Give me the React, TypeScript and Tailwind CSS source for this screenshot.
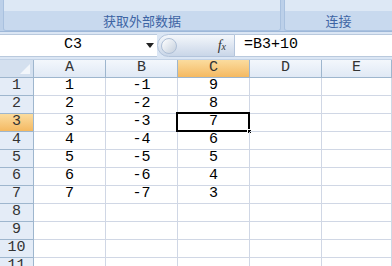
const cols = ["A", "B", "C", "D", "E"];

const data: Record<number, string[]> = {
  1: ["1", "-1", "9"],
  2: ["2", "-2", "8"],
  3: ["3", "-3", "7"],
  4: ["4", "-4", "6"],
  5: ["5", "-5", "5"],
  6: ["6", "-6", "4"],
  7: ["7", "-7", "3"],
};

const rows = [1, 2, 3, 4, 5, 6, 7, 8, 9, 10, 11];
const mono = "font-['SimSun','Liberation_Mono','DejaVu_Sans_Mono',monospace]";

export default function App() {
  return (
    <div className="w-[392px] h-[266px] overflow-hidden bg-white">
      {/* ribbon */}
      <div className="flex h-[32px] bg-[#bcd0e9] border-b border-[#9db7d8]">
        <div className="ml-[3px] w-[278px] flex flex-col border-x border-b border-[#a9c1df] rounded-b-[3px] overflow-hidden">
          <div className="h-[11px] bg-[#dde8f5]" />
          <div className="flex-1 flex items-center justify-center bg-[#c8d9ee] text-[13px] text-[#3d64a4] font-['Noto_Sans_CJK_SC',sans-serif]">
            获取外部数据
          </div>
        </div>
        <div className="ml-[3px] flex-1 flex flex-col border-l border-b border-[#a9c1df] rounded-bl-[3px] overflow-hidden">
          <div className="h-[11px] bg-[#dde8f5]" />
          <div className="flex-1 flex items-center justify-center bg-[#c8d9ee] text-[13px] text-[#3d64a4] font-['Noto_Sans_CJK_SC',sans-serif]">
            连接
          </div>
        </div>
      </div>

      {/* formula bar */}
      <div className="flex h-[28px] bg-[#dbe6f4] pt-[2px] pb-[2px] border-b border-[#c2d2e6]">
        <div className="w-[157px] flex items-center bg-white border-y border-[#b9c9dd]">
          <span className={`flex-1 text-center text-[15px] text-black ${mono}`}>C3</span>
          <svg width="8" height="5" viewBox="0 0 8 5" className="mr-[3px]">
            <path d="M0 0 H8 L4 5 Z" fill="#222" />
          </svg>
        </div>
        <div className="relative w-[78px] flex items-center justify-end pr-[8px] rounded-l-full bg-gradient-to-b from-[#f4f7fb] to-[#c9d6e8] border border-[#b3c4db]">
          <span className="absolute left-[3px] top-[3px] w-[16px] h-[16px] rounded-full bg-gradient-to-br from-[#ffffff] to-[#c4cfdd] border border-[#aebfd6]" />
          <span className="font-['Liberation_Serif',serif] italic text-[14px] text-[#333] leading-none">
            f<span className="text-[10px]">x</span>
          </span>
        </div>
        <div className={`flex-1 flex items-center pl-[9px] bg-white border-y border-[#b9c9dd] text-[15px] text-black ${mono}`}>
          =B3+10
        </div>
      </div>

      {/* grid */}
      <div className="grid grid-cols-[34px_72px_72px_72px_72px_1fr] auto-rows-[18px]">
        <div className="relative bg-[#d4e0ef] border-r border-b border-[#9eb6ce]">
          <svg width="10" height="10" viewBox="0 0 10 10" className="absolute right-[3px] bottom-[3px]">
            <path d="M10 0 V10 H0 Z" fill="#f2f6fb" />
          </svg>
        </div>
        {cols.map((c) => (
          <div
            key={c}
            className={`flex items-center justify-center text-[15px] text-[#333] border-r border-b border-[#9eb6ce] ${mono} ${
              c === "C" ? "bg-gradient-to-b from-[#fbdc9e] to-[#f4b961]" : "bg-gradient-to-b from-[#f3f7fc] to-[#e0e9f5]"
            }`}
          >
            {c}
          </div>
        ))}
        {rows.map((r) => (
          <RowCells key={r} r={r} />
        ))}
      </div>
    </div>
  );
}

function RowCells({ r }: { r: number }) {
  const vals = data[r] || [];
  return (
    <>
      <div
        className={`flex items-center justify-center text-[15px] text-[#333] border-r border-b border-[#9eb6ce] ${mono} ${
          r === 3 ? "bg-gradient-to-b from-[#fbdc9e] to-[#f4b961]" : "bg-[#e4ecf7]"
        }`}
      >
        {r}
      </div>
      {cols.map((c, i) => (
        <div
          key={c}
          className={`relative flex items-center justify-center text-[15px] text-black border-r border-b border-[#d0d7e5] ${mono}`}
        >
          {vals[i] ?? ""}
          {r === 3 && c === "C" && (
            <>
              <span className="absolute left-[-2px] top-[-2px] right-[-1px] bottom-[-1px] border-2 border-black" />
              <span className="absolute right-[-3px] bottom-[-3px] w-[5px] h-[5px] bg-black border border-white" />
            </>
          )}
        </div>
      ))}
    </>
  );
}
